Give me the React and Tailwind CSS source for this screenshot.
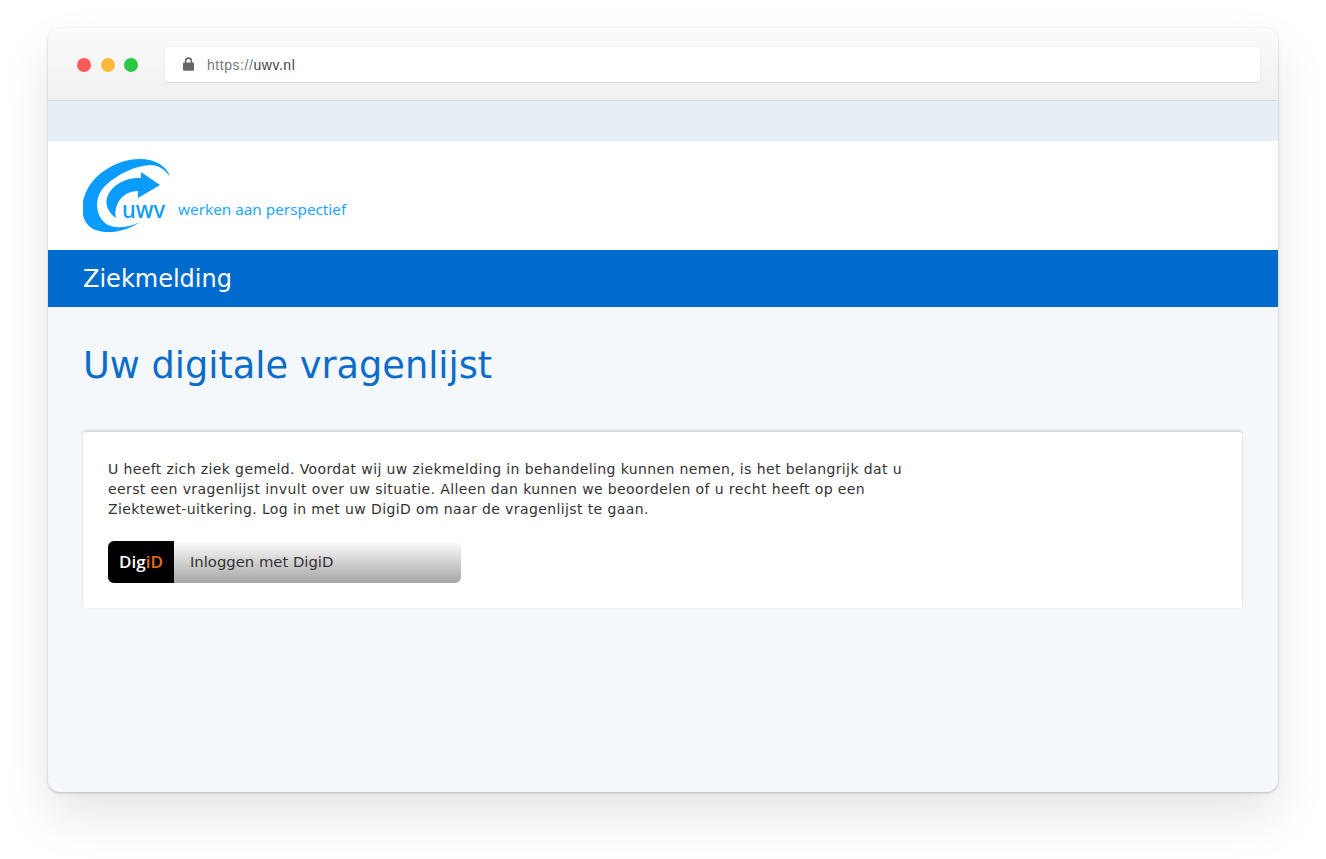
import React from 'react';

// Browser chrome with traffic lights and address bar
function BrowserBar() {
  return (
    <div className="h-[73px] shrink-0 flex items-center pl-[29px] pr-[18px] pt-[1px] bg-gradient-to-b from-[#fbfbfb] to-[#f0f0f0] border-b border-[#d8dadb]">
      <div className="flex items-center gap-[9.5px]">
        <span className="w-[14px] h-[14px] rounded-full bg-[#fd5a5a]" />
        <span className="w-[14px] h-[14px] rounded-full bg-[#fdb93b]" />
        <span className="w-[14px] h-[14px] rounded-full bg-[#2bc845]" />
      </div>
      <div className="ml-[27px] flex-1 h-[35px] flex items-center pl-[18px] bg-white rounded-[4px] shadow-[0_1px_2px_rgba(0,0,0,0.1)]">
        <svg width="11" height="14" viewBox="0 0 11 14" className="shrink-0 -mt-[2px]">
          <path d="M2.6 6V4a2.9 2.9 0 0 1 5.8 0v2" fill="none" stroke="#666" strokeWidth="1.6" />
          <rect x="0" y="5.6" width="11" height="8.2" rx="1" fill="#666" />
        </svg>
        <span className="ml-[13px] mt-[1px] text-[14px] tracking-[0.55px] text-[#444] font-['Liberation_Sans',sans-serif]">
          <span className="text-[#777]">https://</span>uwv.nl
        </span>
      </div>
    </div>
  );
}

function UwvLogo() {
  return (
    <svg width="90" height="77" viewBox="83 158 90 77" className="shrink-0" aria-label="UWV logo">
      <path
        d="M170 177C167 166 155 159 140 159C119 159 96 172 87 190C79 206 81 222 93 229C106 235 126 232 140 222C128 228 112 230 104 222C95 214 94 196 106 185C118 174 135 166 150 165C158 165 165 169 170 177Z"
        fill="#0a9bff"
      />
      <path
        d="M116 218C108 212 104 204 108 195C113 184 127 177 141 178L141 172L160 185L138 198L138 191C128 191 120 197 117 205C115 210 115 214 116 218Z"
        fill="#0a9bff"
      />
      <text
        x="122"
        y="218"
        fontSize="24"
        fontWeight="500"
        fill="#0a9bff"
        fontFamily="'Noto Sans', sans-serif"
        textLength="43"
        lengthAdjust="spacingAndGlyphs"
      >
        uwv
      </text>
    </svg>
  );
}

export default function App() {
  return (
    <div className="w-[1326px] h-[859px] bg-white overflow-hidden pt-[28px] pl-[48px]">
      <div className="w-[1230px] h-[764px] flex flex-col rounded-[12px] overflow-hidden bg-[#f4f8fb] shadow-[0_1px_3px_rgba(0,0,0,0.22),0_24px_50px_rgba(0,0,0,0.1)]">
        <BrowserBar />

        {/* Light band above the site header */}
        <div className="h-[40px] shrink-0 bg-[#e6eff5]" />

        {/* Logo row */}
        <header className="h-[109px] shrink-0 bg-white flex items-start pl-[35px] pt-[17px]">
          <UwvLogo />
          <span className="ml-[5px] mt-[40px] text-[15.3px] leading-[22px] text-[#1ea5ff] font-['Noto_Sans',sans-serif]">
            werken aan perspectief
          </span>
        </header>

        {/* Blue title bar */}
        <div className="h-[57px] shrink-0 flex items-center pl-[35px] bg-[#006bcc] text-white text-[24px] font-['DejaVu_Sans',sans-serif]">
          Ziekmelding
        </div>

        <main className="flex-1 pl-[35px] pr-[36px] pt-[36px]">
          <h1 className="text-[36.7px] leading-[46px] text-[#0a6ccb] font-['DejaVu_Sans',sans-serif]">
            Uw digitale vragenlijst
          </h1>

          <section className="mt-[43px] h-[176px] pl-[25px] pt-[27px] bg-white rounded-[3px] shadow-[0_-2px_3px_rgba(0,0,0,0.13),0_0_2px_rgba(0,0,0,0.05)]">
            <p className="w-[800px] text-[14px] tracking-[0.39px] leading-[20px] text-[#333] font-['DejaVu_Sans',sans-serif]">
              U heeft zich ziek gemeld. Voordat wij uw ziekmelding in behandeling kunnen nemen, is het belangrijk dat u
              eerst een vragenlijst invult over uw situatie. Alleen dan kunnen we beoordelen of u recht heeft op een
              Ziektewet-uitkering. Log in met uw DigiD om naar de vragenlijst te gaan.
            </p>

            <button className="mt-[22px] w-[353px] h-[42px] flex items-stretch rounded-[6px] overflow-hidden bg-gradient-to-b from-white to-[#a6a6a6] text-left cursor-pointer">
              <span className="w-[66px] flex items-center justify-center bg-black text-[17px] font-semibold font-['Open_Sans',sans-serif] text-white">
                Dig<span className="text-[#e8701a]">iD</span>
              </span>
              <span className="pl-[16px] self-center text-[14.8px] text-[#333] font-['DejaVu_Sans',sans-serif]">
                Inloggen met DigiD
              </span>
            </button>
          </section>
        </main>
      </div>
    </div>
  );
}
